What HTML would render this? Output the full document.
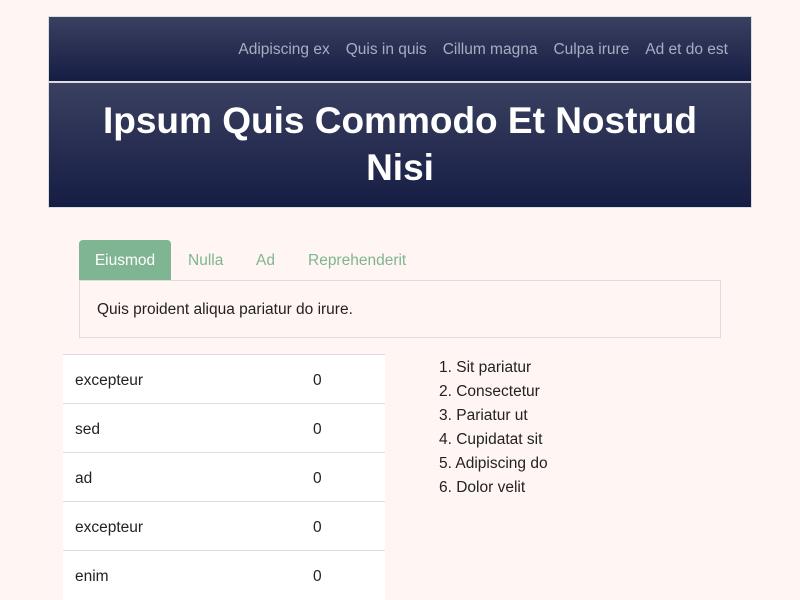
<!DOCTYPE html>
<html><head><meta charset="utf-8"><style>
*{box-sizing:border-box;margin:0;padding:0}
body{width:800px;height:600px;overflow:hidden;background:#fff5f3;font-family:"Liberation Sans",sans-serif;color:#222;position:relative}
.hdr{position:absolute;left:48px;top:16px;width:704px;height:192px;border:1px solid #ddd;background:#ddd}
.nav{position:absolute;left:0;top:0;width:702px;height:64px;background:linear-gradient(#3a4060,#161d44);text-align:right;padding-right:23px}
.nav span{display:inline-block;color:#a9adc0;font-size:15.5px;line-height:66px;margin-left:16px}
.title{position:absolute;left:0;top:66px;width:702px;height:124px;background:linear-gradient(#3a4060,#161d44);color:#fff;text-align:center;font-weight:bold;font-size:37px;line-height:47px;padding-top:14px}
.tab{position:absolute;top:241px;height:40px;line-height:40px;font-size:15.5px;color:#7fb592}
.tab.a{top:240px;background:#7fb592;color:#fff;border-radius:4px 4px 0 0;left:79px;width:92px;text-align:center;line-height:42px}
.box{position:absolute;left:79px;top:280px;width:642px;height:58px;border:1px solid #dcdde3;padding-left:17px;line-height:58px;font-size:15.5px}
table{position:absolute;left:63px;top:354px;width:322px;border-collapse:collapse;background:#fff}
td{height:49px;border-top:1px solid #dcdde3;font-size:15.5px;padding-left:12px;padding-top:3px}
td+td{padding-left:0;width:72px}
ol{position:absolute;left:439px;top:356px;list-style:none;font-size:15.5px;line-height:24px}
</style></head><body>
<div class="hdr">
<div class="nav"><span>Adipiscing ex</span><span>Quis in quis</span><span>Cillum magna</span><span>Culpa irure</span><span>Ad et do est</span></div>
<div class="title">Ipsum Quis Commodo Et Nostrud<br>Nisi</div>
</div>
<div class="tab a">Eiusmod</div>
<div class="tab" style="left:188px">Nulla</div>
<div class="tab" style="left:256px">Ad</div>
<div class="tab" style="left:308px">Reprehenderit</div>
<div class="box">Quis proident aliqua pariatur do irure.</div>
<table>
<tr><td>excepteur</td><td>0</td></tr>
<tr><td>sed</td><td>0</td></tr>
<tr><td>ad</td><td>0</td></tr>
<tr><td>excepteur</td><td>0</td></tr>
<tr><td>enim</td><td>0</td></tr>
</table>
<ol><li>1. Sit pariatur</li><li>2. Consectetur</li><li>3. Pariatur ut</li><li>4. Cupidatat sit</li><li>5. Adipiscing do</li><li>6. Dolor velit</li></ol>
</body></html>
